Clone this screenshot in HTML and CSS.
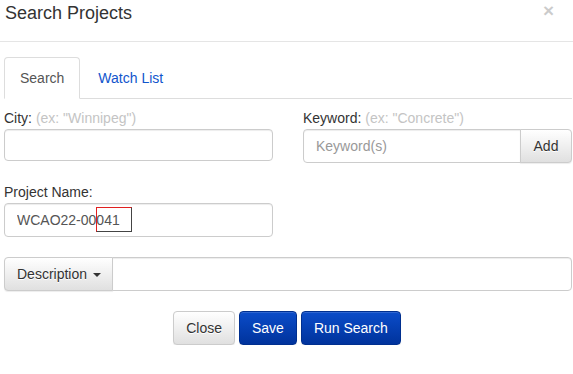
FILE: index.html
```html
<!DOCTYPE html>
<html lang="en">
<head>
    <meta charset="UTF-8">
    <meta name="viewport" content="width=device-width, initial-scale=1.0">
    <title>Search Projects</title>
    <link rel="stylesheet" href="styles.css">
</head>
<body>

<div class="modal">
    <div class="modal-header">
        <h4 class="modal-title">Search Projects</h4>
        <button class="close">&times;</button>
    </div>

    <div class="modal-body">
        <ul class="nav-tabs">
            <li class="active"><a href="#">Search</a></li>
            <li><a href="#">Watch List</a></li>
        </ul>

        <div class="tab-content">
            <div class="form-row">
                <div class="form-group">
                    <label>City: <span class="hint">(ex: "Winnipeg")</span></label>
                    <input type="text" class="form-control city">
                </div>
                <div class="form-group">
                    <label>Keyword: <span class="hint">(ex: "Concrete")</span></label>
                    <div class="input-group">
                        <input type="text" class="form-control" placeholder="Keyword(s)">
                        <button class="btn btn-default addon-right">Add</button>
                    </div>
                </div>
            </div>

            <div class="form-row second">
                <div class="form-group">
                    <label>Project Name:</label>
                    <div class="marked">
                        <input type="text" class="form-control" value="WCAO22-00041">
                        <span class="mark-box"></span>
                    </div>
                </div>
            </div>

            <div class="input-group description">
                <button class="btn btn-default addon-left">Description <span class="caret"></span></button>
                <input type="text" class="form-control">
            </div>

            <div class="actions">
                <button class="btn btn-default">Close</button>
                <button class="btn btn-primary">Save</button>
                <button class="btn btn-primary">Run Search</button>
            </div>
        </div>
    </div>
</div>

</body>
</html>
```

FILE: styles.css
```css
body {
    font-family: "Liberation Sans", Arial, sans-serif;
    font-size: 14px;
    line-height: 20px;
    color: #333;
    margin: 0;
    padding: 0;
    background-color: #fff;
}

.modal-header {
    position: relative;
    height: 41px;
    padding: 0 5px;
    border-bottom: 1px solid #e5e5e5;
}

.modal-title {
    margin: 0;
    padding-top: 2px;
    font-size: 18px;
    line-height: 22px;
    font-weight: normal;
    color: #333;
}

.close {
    position: absolute;
    top: 1px;
    right: 19px;
    padding: 0;
    border: none;
    background: none;
    font-family: "Liberation Sans", Arial, sans-serif;
    font-size: 19px;
    font-weight: bold;
    line-height: 20px;
    color: #000;
    opacity: 0.2;
    cursor: pointer;
}

.modal-body {
    padding: 15px 1px 0 4px;
}

.nav-tabs {
    display: flex;
    margin: 0;
    padding: 0;
    list-style: none;
    border-bottom: 1px solid #ddd;
}

.nav-tabs li {
    margin-bottom: -1px;
    margin-right: 2px;
}

.nav-tabs a {
    display: block;
    padding: 10px 15px;
    border: 1px solid transparent;
    border-radius: 4px 4px 0 0;
    color: #1155cc;
    text-decoration: none;
}

.nav-tabs li.active a {
    color: #555;
    background-color: #fff;
    border-color: #ddd #ddd transparent;
}

.tab-content {
    padding-top: 9px;
}

.form-row {
    display: grid;
    grid-template-columns: 269px 269px;
    column-gap: 30px;
    margin-bottom: 19px;
}

.form-row.second {
    margin-bottom: 20px;
}

label {
    display: block;
    margin-bottom: 1px;
    font-weight: normal;
}

.hint {
    color: #c4c4c4;
}

.form-control {
    display: block;
    box-sizing: border-box;
    width: 100%;
    height: 34px;
    padding: 6px 12px;
    font-family: "Liberation Sans", Arial, sans-serif;
    font-size: 14px;
    color: #555;
    background-color: #fff;
    border: 1px solid #ccc;
    border-radius: 4px;
    box-shadow: inset 0 1px 1px rgba(0, 0, 0, 0.075);
}

.form-control::placeholder {
    color: #999;
}

.form-control.city {
    height: 32px;
}

.marked {
    position: relative;
}

.mark-box {
    position: absolute;
    left: 92px;
    top: 4px;
    width: 34px;
    height: 23px;
    border: 1px solid #444;
    border-left-color: #e02020;
    border-top-color: #e02020;
}

.input-group {
    display: flex;
}

.input-group .form-control {
    flex: 1;
}

.btn {
    display: inline-block;
    box-sizing: border-box;
    height: 34px;
    padding: 6px 12px;
    font-family: "Liberation Sans", Arial, sans-serif;
    font-size: 14px;
    line-height: 20px;
    border: 1px solid transparent;
    border-radius: 4px;
    cursor: pointer;
}

.btn-default {
    color: #333;
    background-image: linear-gradient(to bottom, #fff 0, #e0e0e0 100%);
    border-color: #ccc;
    text-shadow: 0 1px 0 #fff;
    box-shadow: inset 0 1px 0 rgba(255, 255, 255, 0.15), 0 1px 1px rgba(0, 0, 0, 0.075);
}

.btn-primary {
    color: #fff;
    background-image: linear-gradient(to bottom, #0b4cc9 0, #00339c 100%);
    border-color: #002f8f;
    box-shadow: inset 0 1px 0 rgba(255, 255, 255, 0.15), 0 1px 1px rgba(0, 0, 0, 0.075);
}

.addon-right {
    border-top-left-radius: 0;
    border-bottom-left-radius: 0;
    margin-left: -1px;
    width: 52px;
    padding: 6px 0;
}

.input-group .form-control:first-child {
    border-top-right-radius: 0;
    border-bottom-right-radius: 0;
}

.addon-left {
    width: 109px;
    padding: 6px 0 6px 12px;
    text-align: left;
    border-top-right-radius: 0;
    border-bottom-right-radius: 0;
}

.description .form-control {
    margin-left: -1px;
    border-top-left-radius: 0;
    border-bottom-left-radius: 0;
}

.caret {
    display: inline-block;
    width: 0;
    height: 0;
    margin-left: 2px;
    vertical-align: middle;
    border-top: 4px solid #333;
    border-right: 4px solid transparent;
    border-left: 4px solid transparent;
}

.actions {
    display: flex;
    justify-content: center;
    gap: 4px;
    margin-top: 20px;
    padding-right: 2px;
}
```
